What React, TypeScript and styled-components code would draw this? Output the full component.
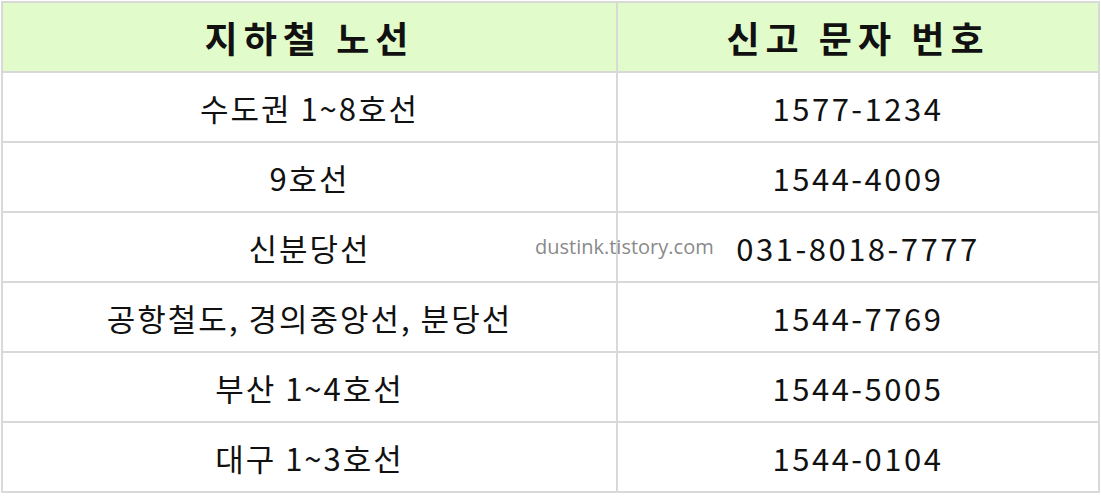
import styled, { createGlobalStyle } from "styled-components";

const GlobalStyle = createGlobalStyle`
    body {
        margin: 0;
        background: #ffffff;
        font-family: "Noto Sans CJK KR", "Noto Sans", sans-serif;
    }
`

const Wrapper = styled.div`
    position: relative;
    width: 1101px;
    height: 503px;
    padding: 1px 0 0 1px;
    box-sizing: border-box;
`

const Table = styled.table`
    width: 1099px;
    border-collapse: collapse;
    table-layout: fixed;
`

const Head = styled.th`
    height: 68px;
    padding: 0;
    background: #e2fbca;
    border: 2px solid #d9d9d9;
    color: #111;
    font-size: 36px;
    font-weight: 700;
    letter-spacing: 6px;
    text-align: center;
`

const Cell = styled.td<{ $num?: boolean }>`
    height: 68px;
    padding: 0;
    border: 2px solid #d9d9d9;
    color: #111;
    font-size: 31px;
    font-weight: 400;
    letter-spacing: ${(p) => (p.$num ? "2.5px" : "2px")};
    text-align: center;
`

const Watermark = styled.div`
    position: absolute;
    left: 535px;
    top: 233px;
    color: #8a8a8a;
    font-family: "Open Sans", "Noto Sans", sans-serif;
    font-size: 20px;
`

export default function App() {
    const rows = [
        { line: "수도권 1~8호선", phone: "1577-1234" },
        { line: "9호선", phone: "1544-4009" },
        { line: "신분당선", phone: "031-8018-7777" },
        { line: "공항철도, 경의중앙선, 분당선", phone: "1544-7769" },
        { line: "부산 1~4호선", phone: "1544-5005" },
        { line: "대구 1~3호선", phone: "1544-0104" },
    ]
    return (
        <Wrapper>
            <GlobalStyle />
            <Table>
                <colgroup>
                    <col style={{ width: 615 }} />
                    <col />
                </colgroup>
                <thead>
                    <tr>
                        <Head>지하철 노선</Head>
                        <Head>신고 문자 번호</Head>
                    </tr>
                </thead>
                <tbody>
                    {rows.map((row) => (
                        <tr key={row.phone}>
                            <Cell>{row.line}</Cell>
                            <Cell $num>{row.phone}</Cell>
                        </tr>
                    ))}
                </tbody>
            </Table>
            <Watermark>dustink.tistory.com</Watermark>
        </Wrapper>
    )
}
